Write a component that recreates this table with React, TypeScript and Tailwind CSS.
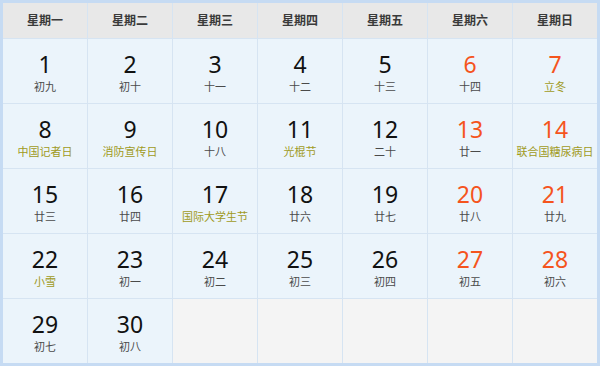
const weekdays = ['星期一', '星期二', '星期三', '星期四', '星期五', '星期六', '星期日'];

type Day = { n: number; sub: string; fest?: boolean };

const days: Day[] = [
  { n: 1, sub: '初九' },
  { n: 2, sub: '初十' },
  { n: 3, sub: '十一' },
  { n: 4, sub: '十二' },
  { n: 5, sub: '十三' },
  { n: 6, sub: '十四' },
  { n: 7, sub: '立冬', fest: true },
  { n: 8, sub: '中国记者日', fest: true },
  { n: 9, sub: '消防宣传日', fest: true },
  { n: 10, sub: '十八' },
  { n: 11, sub: '光棍节', fest: true },
  { n: 12, sub: '二十' },
  { n: 13, sub: '廿一' },
  { n: 14, sub: '联合国糖尿病日', fest: true },
  { n: 15, sub: '廿三' },
  { n: 16, sub: '廿四' },
  { n: 17, sub: '国际大学生节', fest: true },
  { n: 18, sub: '廿六' },
  { n: 19, sub: '廿七' },
  { n: 20, sub: '廿八' },
  { n: 21, sub: '廿九' },
  { n: 22, sub: '小雪', fest: true },
  { n: 23, sub: '初一' },
  { n: 24, sub: '初二' },
  { n: 25, sub: '初三' },
  { n: 26, sub: '初四' },
  { n: 27, sub: '初五' },
  { n: 28, sub: '初六' },
  { n: 29, sub: '初七' },
  { n: 30, sub: '初八' },
];

export default function App() {
  const blanks = 35 - days.length;

  return (
    <div
      className="w-[600px] h-[366px] border-[3px] border-[#c6dbf3] bg-[#d6e4f2] overflow-hidden"
      style={{ fontFamily: '"Noto Sans", "Noto Sans CJK SC", sans-serif' }}
    >
      <div className="grid grid-cols-7 gap-px grid-rows-[35px_repeat(5,64px)]">
        {weekdays.map((w) => (
          <div
            key={w}
            className="flex items-center justify-center bg-[#e8e8e8] text-[12px] font-bold text-[#3a3a3a]"
          >
            {w}
          </div>
        ))}
        {days.map((d, i) => {
          const weekend = i % 7 >= 5;
          return (
            <div key={d.n} className="flex flex-col items-center bg-[#ebf4fb] pt-[11px]">
              <div
                className={`text-[23px] leading-[28px] ${weekend ? 'text-[#f5541d]' : 'text-[#111]'}`}
              >
                {d.n}
              </div>
              <div
                className={`text-[11px] leading-[15px] mt-[1px] whitespace-nowrap ${d.fest ? 'text-[#a09a1c]' : 'text-[#4a4a4a]'}`}
              >
                {d.sub}
              </div>
            </div>
          );
        })}
        {Array.from({ length: blanks }).map((_, i) => (
          <div key={'b' + i} className="bg-[#f4f4f4]" />
        ))}
      </div>
    </div>
  );
}
